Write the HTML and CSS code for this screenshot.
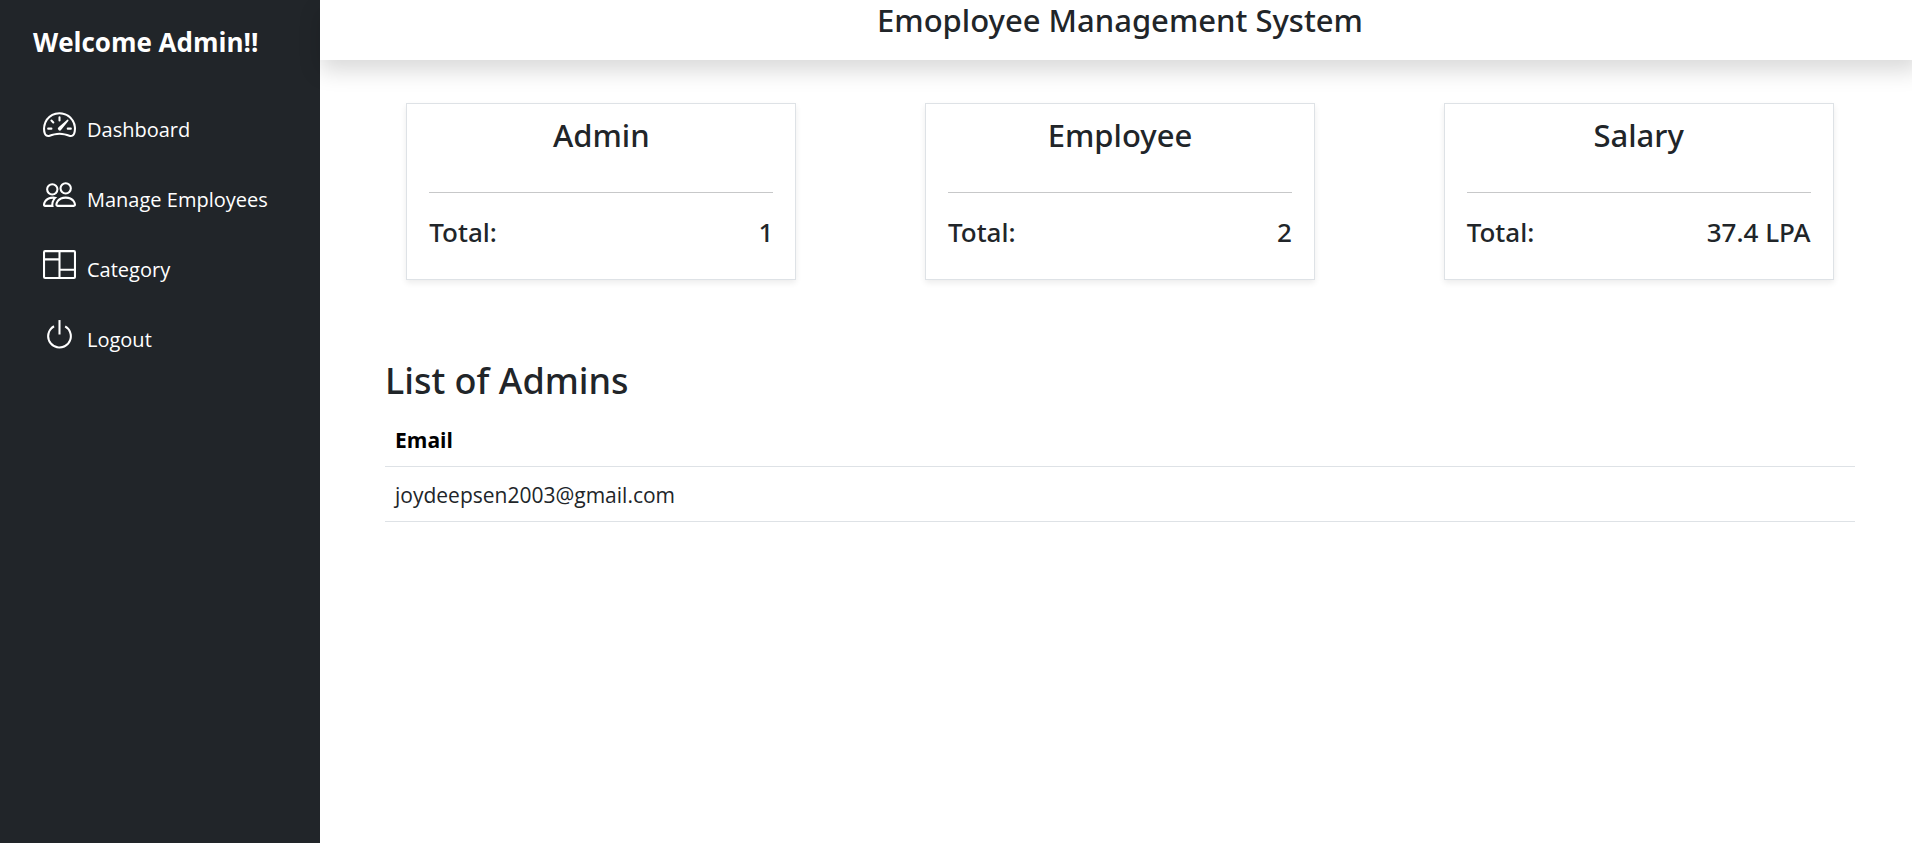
FILE: index.html
```html
<!DOCTYPE html>
<html lang="en">
<head>
<meta charset="utf-8">
<meta name="viewport" content="width=device-width, initial-scale=1">
<title>Employee Management System</title>
<link rel="stylesheet" href="styles.css">
</head>
<body>
<div class="shell">
  <aside class="sidebar">
    <a class="brand" href="#">Welcome Admin!!</a>
    <nav>
      <ul class="menu">
        <li><a class="menu-link" href="#"><svg class="icon" viewBox="0 0 16 16" aria-hidden="true"><path d="M8 4a.5.5 0 0 1 .5.5V6a.5.5 0 0 1-1 0V4.5A.5.5 0 0 1 8 4zM3.732 5.732a.5.5 0 0 1 .707 0l.915.914a.5.5 0 1 1-.708.708l-.914-.915a.5.5 0 0 1 0-.707zM2 10a.5.5 0 0 1 .5-.5h1.586a.5.5 0 0 1 0 1H2.5A.5.5 0 0 1 2 10zm9.5 0a.5.5 0 0 1 .5-.5h1.5a.5.5 0 0 1 0 1H12a.5.5 0 0 1-.5-.5zm.754-4.246a.389.389 0 0 0-.527-.02L7.547 9.31a.91.91 0 1 0 1.302 1.258l3.434-4.297a.389.389 0 0 0-.029-.518z"/><path fill-rule="evenodd" d="M0 10a8 8 0 1 1 15.547 2.661c-.442 1.253-1.845 1.602-2.932 1.25C11.309 13.488 9.475 13 8 13c-1.474 0-3.31.488-4.615.911-1.087.352-2.49.003-2.932-1.25A7.988 7.988 0 0 1 0 10zm8-7a7 7 0 0 0-6.603 9.329c.203.575.923.876 1.68.63C4.397 12.533 6.358 12 8 12s3.604.532 4.923.96c.757.245 1.477-.056 1.68-.631A7 7 0 0 0 8 3z"/></svg><span class="menu-text">Dashboard</span></a></li>
        <li><a class="menu-link" href="#"><svg class="icon" viewBox="0 0 16 16" aria-hidden="true"><path d="M15 14s1 0 1-1-1-4-5-4-5 3-5 4 1 1 1 1h8Zm-7.978-1A.261.261 0 0 1 7 12.996c.001-.264.167-1.03.76-1.72C8.312 10.629 9.282 10 11 10c1.717 0 2.687.63 3.24 1.276.593.69.758 1.457.76 1.72l-.008.002a.274.274 0 0 1-.014.002H7.022ZM11 7a2 2 0 1 0 0-4 2 2 0 0 0 0 4Zm3-2a3 3 0 1 1-6 0 3 3 0 0 1 6 0ZM6.936 9.28a5.88 5.88 0 0 0-1.23-.247A7.35 7.35 0 0 0 5 9c-4 0-5 3-5 4 0 .667.333 1 1 1h4.216A2.238 2.238 0 0 1 5 13c0-1.01.377-2.042 1.09-2.904.243-.294.526-.569.846-.816ZM4.92 10A5.493 5.493 0 0 0 4 13H1c0-.26.164-1.03.76-1.724.545-.636 1.492-1.256 3.16-1.275ZM1.5 5.5a3 3 0 1 1 6 0 3 3 0 0 1-6 0Zm3-2a2 2 0 1 0 0 4 2 2 0 0 0 0-4Z"/></svg><span class="menu-text">Manage Employees</span></a></li>
        <li><a class="menu-link" href="#"><svg class="icon" viewBox="0 0 16 16" aria-hidden="true"><path d="M0 2a1 1 0 0 1 1-1h14a1 1 0 0 1 1 1v12a1 1 0 0 1-1 1H1a1 1 0 0 1-1-1V2zm8.500 0v8H15V2H8.500zm0 9v3H15v-3H8.500zm-1-9H1v3h6.500V2zM1 14h6.500V6H1v8z"/></svg><span class="menu-text">Category</span></a></li>
        <li><a class="menu-link" href="#"><svg class="icon" viewBox="0 0 16 16" aria-hidden="true"><path d="M7.500 1v7h1V1h-1z"/><path d="M3 8.812a4.999 4.999 0 0 1 2.578-4.375l-.485-.874A6 6 0 1 0 11 3.616l-.501.865A5 5 0 1 1 3 8.812z"/></svg><span class="menu-text">Logout</span></a></li>
      </ul>
    </nav>
  </aside>
  <main class="main">
    <header class="topbar"><h1 class="title">Emoployee Management System</h1></header>
    <section class="cards">
      <article class="card">
        <h2 class="title">Admin</h2>
        <hr class="rule">
        <div class="total"><span>Total:</span><span>1</span></div>
      </article>
      <article class="card">
        <h2 class="title">Employee</h2>
        <hr class="rule">
        <div class="total"><span>Total:</span><span>2</span></div>
      </article>
      <article class="card">
        <h2 class="title">Salary</h2>
        <hr class="rule">
        <div class="total"><span>Total:</span><span>37.4 LPA</span></div>
      </article>
    </section>
    <section class="admins">
      <h2 class="admins-title">List of Admins</h2>
      <table class="table">
        <thead><tr><th scope="col">Email</th></tr></thead>
        <tbody><tr><td>joydeepsen2003@gmail.com</td></tr></tbody>
      </table>
    </section>
  </main>
</div>
</body>
</html>
```
FILE: styles.css
```css
* { box-sizing: border-box; }
body {
  margin: 0;
  font-family: "Segoe UI", "Open Sans", "Noto Sans", sans-serif;
  font-size: 21px;
  line-height: 32px;
  color: #212529;
  background: #fff;
}
h1, h2, ul { margin: 0; padding: 0; }
a { color: inherit; text-decoration: none; }
.shell { display: flex; min-height: 100vh; overflow: hidden; }
.sidebar {
  flex: 0 0 320px;
  padding: 22px 11px 0 33px;
  color: #fff;
  background: #212529;
}
.brand { display: block; font-size: 26px; line-height: 40px; font-weight: 700; }
.menu { list-style: none; padding: 33px 0 0 10px; font-size: 20px; }
.menu-link { display: block; height: 70px; padding: 11px 0; line-height: 48px; white-space: nowrap; }
.icon { width: 33px; height: 33px; vertical-align: -4px; fill: currentColor; }
.menu-text { margin-left: 11px; }
.main { flex: 1; min-width: 0; margin-right: -8px; }
.topbar {
  height: 60px;
  text-align: center;
  box-shadow: 0 11px 22px rgba(0, 0, 0, .15);
}
.title, .total, .admins-title { font-family: "Segoe UI", "Noto Sans", sans-serif; font-weight: 500; }
.title { font-size: 31px; line-height: 40px; text-align: center; }
.cards { display: flex; justify-content: space-around; padding: 43px 22px 0; }
.card {
  flex: 0 1 390px;
  padding: 11px 22px 27px;
  border: 1px solid #dee2e6;
  box-shadow: 0 3px 6px rgba(0, 0, 0, .075);
}
.rule { margin: 37px 0 19px; border: 0; border-top: 1px solid #c7c8c9; }
.total {
  display: flex;
  justify-content: space-between;
  font-size: 26px;
  line-height: 40px;
}
.admins { padding: 78px 65px 0; }
.admins-title { font-size: 36px; line-height: 46px; padding-bottom: 8px; }
.table { width: 100%; border-collapse: collapse; }
.table th, .table td {
  padding: 12px 10px 10px;
  text-align: left;
  border-bottom: 1px solid #dee2e6;
}
.table th { color: #000; font-weight: 700; }
```
